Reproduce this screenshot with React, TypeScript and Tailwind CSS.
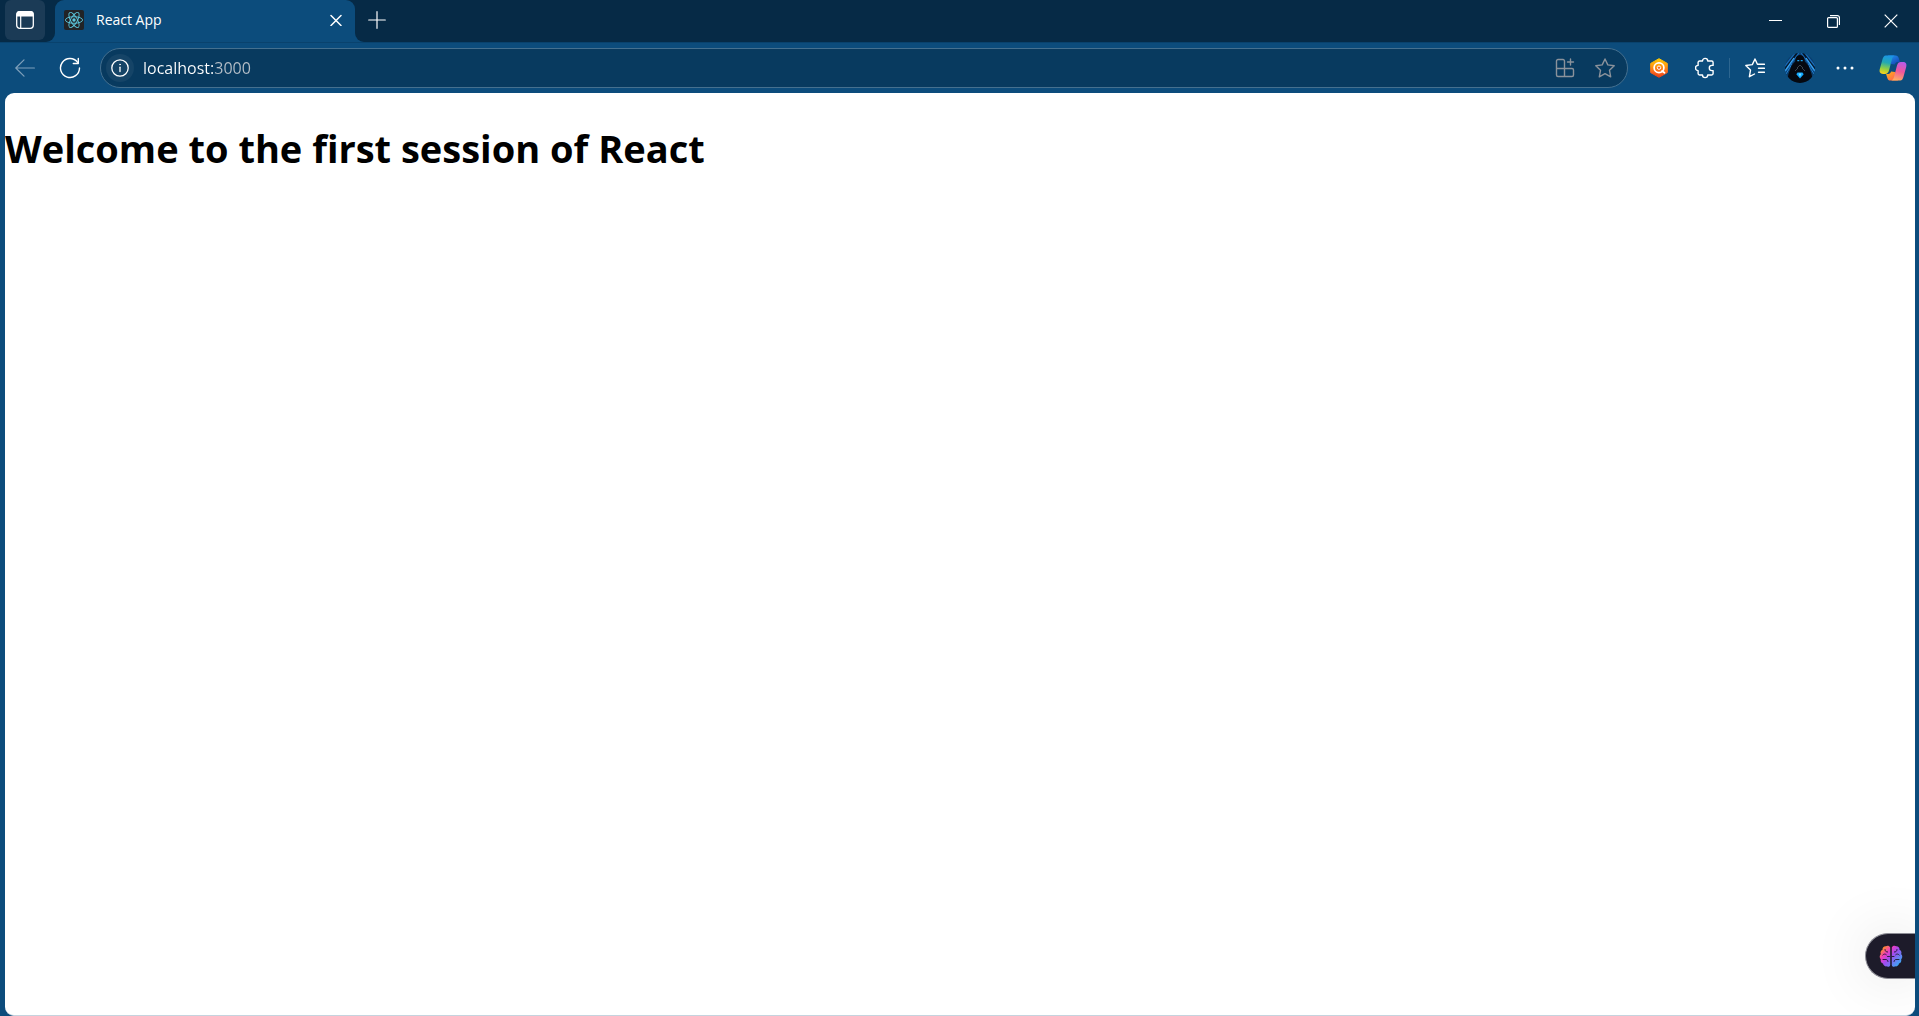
import type { ReactNode } from 'react';

const focusRing = 'outline-none focus-visible:ring-2 focus-visible:ring-white/70';

function ToolButton({ label, className = '', children }: { label: string; className?: string; children: ReactNode }) {
  return (
    <button type="button" aria-label={label} className={`flex shrink-0 items-center justify-center ${focusRing} ${className}`}>
      {children}
    </button>
  );
}

function TabActionsIcon() {
  return (
    <svg width="20" height="20" viewBox="0 0 20 20" fill="none">
      <rect x="1.7" y="1.7" width="16.6" height="16.6" rx="3" stroke="#fff" strokeWidth="1.3" />
      <path d="M1.5 6.5V4a3 3 0 0 1 3-3h11a3 3 0 0 1 3 3v2.5z" fill="#fff" />
      <path d="M5.7 6v12" stroke="#fff" strokeWidth="1.2" />
    </svg>
  );
}

function ReactLogo() {
  return (
    <svg width="20" height="20" viewBox="0 0 20 20" fill="none">
      <rect width="20" height="20" rx="2" fill="#222326" />
      <circle cx="10" cy="10" r="1.7" fill="#5cc8de" />
      <g stroke="#5cc8de" strokeWidth="0.9">
        <ellipse cx="10" cy="10" rx="8.6" ry="3.3" />
        <ellipse cx="10" cy="10" rx="8.6" ry="3.3" transform="rotate(60 10 10)" />
        <ellipse cx="10" cy="10" rx="8.6" ry="3.3" transform="rotate(120 10 10)" />
      </g>
    </svg>
  );
}

function ExtensionBadge() {
  return (
    <svg width="18" height="20" viewBox="0 0 18 20" fill="none">
      <defs>
        <linearGradient id="hex" x1="9" y1="0" x2="9" y2="20" gradientUnits="userSpaceOnUse">
          <stop stopColor="#ffd000" />
          <stop offset="0.4" stopColor="#ff9a10" />
          <stop offset="0.7" stopColor="#f9661c" />
          <stop offset="1" stopColor="#e83a14" />
        </linearGradient>
      </defs>
      <path d="M9 .7l8.3 4.7v9.2L9 19.3.7 14.6V5.4z" fill="url(#hex)" stroke="url(#hex)" strokeLinejoin="round" />
      <circle cx="9" cy="9.7" r="4.900" stroke="#fff" strokeWidth="1.700" />
      <circle cx="9" cy="9.700" r="1.700" fill="#f9661c" stroke="#fff" strokeWidth="1" />
      <path d="M12 13l2.500 1.800" stroke="#fff" strokeWidth="1.700" strokeLinecap="round" />
    </svg>
  );
}

function PuzzleIcon() {
  return (
    <svg width="20" height="22" viewBox="0 0 20 22" fill="none" stroke="#fff" strokeWidth="1.4" strokeLinejoin="round" strokeLinecap="round">
      <path d="M4.500 4h3a2.600 2.600 0 0 1 5.200 0h4a1.400 1.400 0 0 1 1.400 1.400v3h-1.200a2.600 2.600 0 0 0 0 5.200h1.200v3a1.400 1.400 0 0 1-1.400 1.400h-4a2.600 2.600 0 0 1-5.200 0h-3A1.400 1.400 0 0 1 3.100 16.600v-3a2.600 2.600 0 0 1 0-5.200v-3A1.400 1.400 0 0 1 4.500 4z" />
    </svg>
  );
}

function Avatar() {
  return (
    <svg width="30" height="30" viewBox="0 0 30 30" fill="none">
      <defs>
        <clipPath id="face"><circle cx="15" cy="15" r="15" /></clipPath>
      </defs>
      <g clipPath="url(#face)">
        <rect width="30" height="30" fill="#0a3c6c" />
        <path d="M12 0L0 16M18 0l12 16" stroke="#061626" strokeWidth="1.600" />
        <path d="M10 0L0 13M14 0L0 19M7 0L0 8M20 0l10 13M16 0l14 19M23 0l7 8" stroke="#1b6dba" strokeWidth="1.100" />
        <path d="M9 5L0 18M21 5l9 13" stroke="#3aa4f2" strokeWidth="1.300" />
        <path d="M7 11L1 21M23 11l6 10" stroke="#1f7fd0" strokeWidth="1" />
        <path d="M15 2c-3 0-4.700 2.800-4.800 6.500L6.500 12.500 3.500 21l-2 9h27l-2-9-3-8.500-3.700-4C19.700 4.800 18 2 15 2z" fill="#05080f" />
        <path d="M12.300 7.600h2M15.700 7.600h2" stroke="#1b9fe8" strokeWidth="1.400" />
        <path d="M12 15l3-3 3 3M10 18l3-3M20 18l-3-3" stroke="#39424c" strokeWidth="1" />
        <path d="M12.500 19.500h5l1.200 1.700-3.700 4.200-3.700-4.200z" fill="#12a8ff" />
        <path d="M13.500 20.500h3L15 23.700z" fill="#7be0ff" />
      </g>
    </svg>
  );
}

function CopilotLogo() {
  return (
    <svg width="28" height="26" viewBox="0 0 28 26" fill="none">
      <defs>
        <linearGradient id="cpa" x1="9" y1="0" x2="5" y2="19" gradientUnits="userSpaceOnUse">
          <stop stopColor="#1b93ea" />
          <stop offset="0.4" stopColor="#22a8b4" />
          <stop offset="0.72" stopColor="#8fcf45" />
          <stop offset="1" stopColor="#ffd21a" />
        </linearGradient>
        <linearGradient id="cpb" x1="23" y1="6" x2="17" y2="26" gradientUnits="userSpaceOnUse">
          <stop stopColor="#b05cf0" />
          <stop offset="0.5" stopColor="#f0569c" />
          <stop offset="1" stopColor="#ffb45c" />
        </linearGradient>
        <linearGradient id="cpc" x1="14" y1="0" x2="19" y2="8" gradientUnits="userSpaceOnUse">
          <stop stopColor="#1f8ae8" />
          <stop offset="1" stopColor="#1748b8" />
        </linearGradient>
        <linearGradient id="cpd" x1="7" y1="18" x2="13" y2="26" gradientUnits="userSpaceOnUse">
          <stop stopColor="#ffb01a" />
          <stop offset="1" stopColor="#ff6a4a" />
        </linearGradient>
      </defs>
      <path d="M9 .5h7.500c1.800 0 2.700 1 3.200 2.600l1.200 4h-2c-1.500 0-2.500.8-3 2.300L12 9z" fill="url(#cpc)" />
      <path d="M19 25.500h-7.500c-1.800 0-2.700-1-3.200-2.600l-1.200-4h2c1.500 0 2.500-.8 3-2.300L16 17z" fill="url(#cpd)" />
      <path d="M6.800.5h9c-1.500.3-2.300 1.800-2.800 3.500L10 15.500c-.7 2.300-1.900 3.400-3.900 3.400H4c-2.700 0-4-1.700-3.200-4.800L3.300 5C4.100 2 5 .5 6.800.5z" fill="url(#cpa)" />
      <path d="M21.200 25.500h-9c1.500-.3 2.300-1.800 2.800-3.500l3-11.500c.7-2.300 1.900-3.400 3.900-3.400H24c2.700 0 4 1.700 3.200 4.800L24.700 21c-.8 3-1.700 4.500-3.500 4.500z" fill="url(#cpb)" />
    </svg>
  );
}

function BrainIcon() {
  return (
    <svg width="24" height="23" viewBox="0 0 24 23" fill="none">
      <defs>
        <linearGradient id="brain" x1="3" y1="2" x2="22" y2="20" gradientUnits="userSpaceOnUse">
          <stop offset="0.05" stopColor="#ff8a2a" />
          <stop offset="0.28" stopColor="#f03cc0" />
          <stop offset="0.5" stopColor="#a04cf0" />
          <stop offset="1" stopColor="#2cb4f5" />
        </linearGradient>
      </defs>
      <path d="M11.200 2.500C10.500.6 8.200.1 6.800 1.300 4.800 1.200 3.300 2.700 3.500 4.700 1.600 5.500 1 7.600 1.900 9.100.3 10.600.3 13 1.800 14.200c-.5 2 .4 3.700 2.200 4.300.3 2 2.200 3.300 4 2.800 1.200 1 3 .5 3.200-1.300zM12.800 2.500c.7-1.900 3-2.400 4.400-1.200 2-.1 3.500 1.400 3.300 3.400 1.900.8 2.500 2.900 1.600 4.400 1.600 1.500 1.600 3.900.1 5.100.5 2-.4 3.700-2.200 4.300-.3 2-2.200 3.300-4 2.800-1.200 1-3 .5-3.200-1.300z" fill="url(#brain)" />
      <path d="M6 4.500c0 1.600 1 2.500 2.600 2.500M3.800 10c1-1.200 2.500-1.300 3.500-.3M4 14.500h3c1 0 2 1 2 2M8.500 11.500h2M18 4.500c0 1.600-1 2.500-2.600 2.500M20.200 10c-1-1.200-2.500-1.300-3.500-.3M20 14.500h-3c-1 0-2 1-2 2M15 11.500h-2" stroke="#1d1b2c" strokeWidth="0.900" strokeLinecap="round" />
    </svg>
  );
}

function TabStrip() {
  return (
    <header className="flex h-[42px] shrink-0 bg-[#0c4c7c]">
      <div className="flex w-[55px] shrink-0 items-start rounded-br-[9px] bg-[#062a46] pl-[5px]">
        <ToolButton label="Tab actions menu" className="h-10 w-10 rounded-md bg-[#1b3b56]">
          <TabActionsIcon />
        </ToolButton>
      </div>
      <div className="w-[300px] shrink-0 bg-linear-to-b from-[#062a46] from-50% to-[#0c4c7c] to-50%">
        <div className="flex h-full items-center rounded-t-[9px] bg-[#0c4c7c] pb-0.5 pl-[9px] pr-[7px]">
          <ReactLogo />
          <span className="ml-3 flex-1 text-[14px] leading-5 text-white">React App</span>
          <ToolButton label="Close tab" className="h-6 w-6 rounded">
            <svg width="12" height="12" viewBox="0 0 12 12" stroke="#fff" strokeWidth="1.500" strokeLinecap="round">
              <path d="M1 1.500l10 10M11 1.500l-10 10" />
            </svg>
          </ToolButton>
        </div>
      </div>
      <div className="flex flex-1 items-start justify-between rounded-bl-[9px] bg-[#062a46]">
        <ToolButton label="New tab" className="h-10 w-11">
          <svg width="18" height="18" viewBox="0 0 18 18" stroke="#fff" strokeWidth="1.200" strokeLinecap="round">
            <path d="M9 .7v16.600M.7 9h16.600" />
          </svg>
        </ToolButton>
        <div className="flex h-[42px]">
          <ToolButton label="Minimize" className="w-[58px]">
            <svg width="13" height="13" viewBox="0 0 13 13" stroke="#fff">
              <path d="M0 5.500h13" />
            </svg>
          </ToolButton>
          <ToolButton label="Restore" className="w-[58px]">
            <svg width="13" height="13" viewBox="0 0 13 13" stroke="#fff" strokeWidth="1.200" fill="none">
              <rect x=".6" y="2.600" width="9.800" height="9.800" rx="1" />
              <path d="M3 .6h7.400a2 2 0 0 1 2 2V10" />
            </svg>
          </ToolButton>
          <ToolButton label="Close window" className="w-[57px]">
            <svg width="14" height="14" viewBox="0 0 14 14" stroke="#fff" strokeWidth="1.200">
              <path d="M.7.7l12.600 12.600M13.300.7L.7 13.300" />
            </svg>
          </ToolButton>
        </div>
      </div>
    </header>
  );
}

function Toolbar() {
  return (
    <nav aria-label="Browser toolbar" className="flex h-[51px] shrink-0 items-center border-t border-[#09426d] pr-3 pl-[5px]">
      <ToolButton label="Back" className="h-10 w-10">
        <svg width="20" height="18" viewBox="0 0 20 18" fill="none" stroke="#7fa0bb" strokeWidth="1.200" strokeLinecap="round" strokeLinejoin="round">
          <path d="M19.400 9H.8M9 .8L.8 9 9 17.200" />
        </svg>
      </ToolButton>
      <ToolButton label="Refresh" className="ml-[5px] h-10 w-10">
        <svg width="22" height="22" viewBox="0 0 22 22" fill="none" stroke="#fff" strokeWidth="1.400" strokeLinecap="round" strokeLinejoin="round">
          <path d="M20.500 11A9.500 9.500 0 1 1 18.600 5.300" />
          <path d="M19.300 1.500v5h-5" />
        </svg>
      </ToolButton>
      <form className="ml-[10px] flex h-10 flex-1 items-center rounded-full border border-[#45708f] bg-[#083a5f] pr-0.5 pl-[5px] focus-within:border-white/70" onSubmit={(e) => e.preventDefault()}>
        <ToolButton label="View site information" className="h-7 w-7 rounded-full bg-[#154467]">
          <svg width="18" height="18" viewBox="0 0 18 18" fill="none" stroke="#fff" strokeWidth="1.300" strokeLinecap="round">
            <circle cx="9" cy="9" r="8.200" />
            <path d="M9 8.200v4.300" />
            <circle cx="9" cy="5.500" r="0.500" fill="#fff" strokeWidth="0.600" />
          </svg>
        </ToolButton>
        <input
          type="text"
          aria-label="Address"
          defaultValue="localhost:3000"
          spellCheck={false}
          className="ml-[9px] h-6 min-w-0 flex-1 bg-linear-to-r from-white from-[70px] to-[#b6bfc8] to-[70px] bg-clip-text text-[16px] leading-6 text-transparent caret-white outline-none"
        />
        <ToolButton label="Install app" className="h-9 w-10">
          <svg width="20" height="20" viewBox="0 0 20 20" fill="none" stroke="#8b929b" strokeWidth="1.400" strokeLinecap="round" strokeLinejoin="round">
            <path d="M9.500 10.500V3A1.500 1.500 0 0 0 8 1.500H3A1.500 1.500 0 0 0 1.500 3v14A1.500 1.500 0 0 0 3 18.500h14a1.500 1.500 0 0 0 1.500-1.500v-5a1.500 1.500 0 0 0-1.500-1.500H1.500M9.500 10.500v8M15.500 1v6M12.500 4h6" />
          </svg>
        </ToolButton>
        <ToolButton label="Add to favorites" className="h-9 w-10">
          <svg width="20" height="20" viewBox="0 0 20 20" fill="none" stroke="#8b929b" strokeWidth="1.400" strokeLinejoin="round">
            <path d="M10 1l2.800 5.900 6.400.9-4.700 4.500 1.200 6.500L10 15.700l-5.700 3.100 1.200-6.500L.8 7.800l6.400-.9z" />
          </svg>
        </ToolButton>
      </form>
      <ToolButton label="Search extension" className="ml-[11px] h-10 w-10"><ExtensionBadge /></ToolButton>
      <ToolButton label="Extensions" className="ml-[6px] h-10 w-10"><PuzzleIcon /></ToolButton>
      <span className="mx-1 h-5 w-px bg-[#2d6690]" />
      <ToolButton label="Favorites" className="h-10 w-[42px]">
        <svg width="20" height="20" viewBox="0 0 20 20" fill="none" stroke="#fff" strokeWidth="1.400" strokeLinecap="round" strokeLinejoin="round">
          <path d="M19.400 6.300h-7L10 1 7.300 6.600.8 7.500l4.700 4.600-1.100 6.600 5.100-2.700M13.500 10.300h5.900M13.500 14.300h5.900" />
        </svg>
      </ToolButton>
      <ToolButton label="Profile" className="ml-1 h-10 w-10 rounded-full"><Avatar /></ToolButton>
      <ToolButton label="Settings and more" className="ml-[5px] h-10 w-10">
        <svg width="18" height="4" viewBox="0 0 18 4" fill="#fff">
          <circle cx="2" cy="2" r="1.500" /><circle cx="9" cy="2" r="1.500" /><circle cx="16" cy="2" r="1.500" />
        </svg>
      </ToolButton>
      <ToolButton label="Copilot" className="ml-[14px] h-10 w-7"><CopilotLogo /></ToolButton>
    </nav>
  );
}

export default function App() {
  return (
    <div className="flex h-screen flex-col overflow-hidden bg-[#0c4c7c] font-['Open_Sans','Noto_Sans',sans-serif]">
      <TabStrip />
      <Toolbar />
      <main className="relative mr-1 ml-[5px] flex-1 overflow-hidden rounded-[9px] border-b border-[#c5d3de] bg-white">
        <h1 className="pt-[27px] text-[38px] leading-[56px] font-bold text-black">Welcome to the first session of React</h1>
        <button type="button" aria-label="Open assistant" className="absolute right-0 bottom-[36px] flex h-[46px] w-[50px] items-center rounded-l-full border border-r-0 border-[#8d8d96] bg-[#1d1b2a] pl-[13px] shadow-[0_0_60px_rgba(0,0,0,0.12)]">
          <BrainIcon />
        </button>
      </main>
    </div>
  );
}
